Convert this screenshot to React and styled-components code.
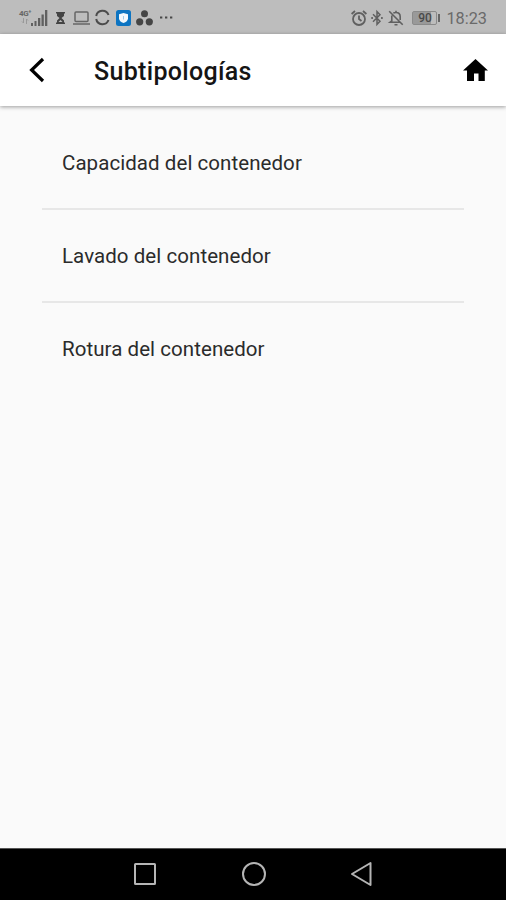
import React from 'react';
import styled, { createGlobalStyle } from 'styled-components';

const GlobalStyle = createGlobalStyle`
  * {
    box-sizing: border-box;
  }

  body {
    margin: 0;
    background: #fafafa;
    font-family: Roboto, sans-serif;
  }
`;

const Screen = styled.div`
  display: flex;
  flex-direction: column;
  height: 900px;
  background: #fafafa;
`;

const StatusBar = styled.div`
  display: flex;
  align-items: center;
  justify-content: space-between;
  height: 34px;
  padding: 1px 19px 0 19px;
  background: #bdbdbd;
  color: #666;
`;

const StatusGroup = styled.div`
  display: flex;
  align-items: center;
`;

const Icon = styled.svg`
  display: block;
  flex: none;
  width: ${props => props.$w}px;
  height: ${props => props.$h}px;
  margin-left: ${props => props.$gap || 0}px;
  overflow: visible;
`;

const Network = styled.div`
  display: flex;
  flex-direction: column;
  align-items: center;
  width: 12px;
  height: 16px;
  font-size: 8px;
  line-height: 8px;
  font-weight: 700;
  letter-spacing: -0.5px;
  white-space: nowrap;
`;

const Battery = styled.div`
  width: 25px;
  height: 14px;
  margin-left: 8px;
  border: 1px solid #8a8a8a;
  border-radius: 2px;
  background: linear-gradient(90deg, #999 0 80%, #bdbdbd 80%);
  color: #4a4a4a;
  font-size: 12px;
  line-height: 13px;
  font-weight: 500;
  text-align: center;
`;

const BatteryTip = styled.div`
  width: 2px;
  height: 8px;
  margin-left: 1px;
  background: #666;
`;

const Clock = styled.div`
  margin-left: 6px;
  padding-top: 2px;
  font-size: 16.3px;
  line-height: 18px;
  color: #6a6a6a;
`;

const Header = styled.header`
  display: flex;
  align-items: center;
  height: 72px;
  padding: 0 18px 0 29px;
  background: #fff;
  box-shadow: 0 1px 4px rgba(0, 0, 0, 0.38);
  z-index: 1;
`;

const Title = styled.h1`
  flex: 1;
  margin: 3px 0 0 49px;
  font-size: 25px;
  line-height: 30px;
  font-weight: 500;
  letter-spacing: 0.32px;
  color: #151515;
`;

const List = styled.ul`
  flex: 1;
  margin: 0;
  padding: 11px 42px 0;
  list-style: none;
`;

const Item = styled.li`
  height: 93px;
  padding: 32px 20px 0;
  border-bottom: 2px solid ${props => (props.$last ? 'transparent' : '#e7e7e7')};
  font-size: 20.5px;
  line-height: 28px;
  letter-spacing: 0.06px;
  color: #2b2b2b;
`;

const NavigationBar = styled.nav`
  display: flex;
  align-items: center;
  height: 52px;
  padding: 0 0 2px 134px;
  border-top: 1px solid #555;
  background: #000;
`;

const items = [
  'Capacidad del contenedor',
  'Lavado del contenedor',
  'Rotura del contenedor'
];

const Notifications = () => (
  <StatusGroup>
    <Network>
      <span>4G⁺</span>
      <Icon $w={6} $h={6} viewBox="0 0 6 6" fill="none" stroke="#999" strokeWidth="1">
        <path d="M1.5 0v5M0 3.5 1.5 5M4.5 6V1M6 2.5 4.5 1" />
      </Icon>
    </Network>
    <Icon $w={17} $h={16} viewBox="0 0 17 16" fill="#606060">
      <path d="M0 13h2v3H0zM3.5 11h2v5h-2zM7 8h2.3v8H7zM10.5 4.5h2.3V16h-2.3zM14 0h2.3v16H14z" />
    </Icon>
    <Icon $w={9} $h={12} $gap={8} viewBox="0 0 9 12" fill="#444">
      <path d="M0 0h9v1.5H8V4L5.5 6 8 8.5v2h1V12H0v-1.500h1v-2L3.500 6 1 4V1.500H0z" />
      <path d="M2.500 10 4.500 8l2 2z" fill="#bdbdbd" />
    </Icon>
    <Icon $w={17} $h={14} $gap={8} viewBox="0 0 17 14" fill="none" stroke="#666" strokeWidth="1.5">
      <rect x="2" y="1" width="13" height="9.5" rx="1" />
      <path d="M0 13h17" />
    </Icon>
    <Icon $w={15} $h={15} $gap={5} viewBox="0 0 15 15" fill="none" stroke="#4c4c4c" strokeWidth="2">
      <path d="M1.2 6A6.4 6.4 0 0 1 13.5 5M1.2 9a6.4 6.4 0 0 0 12.3 1" />
    </Icon>
    <Icon $w={15} $h={16} $gap={6} viewBox="0 0 15 16">
      <rect width="15" height="16" rx="2.5" fill="#0c74c2" />
      <path d="M7.5 3 12 4.2v4c0 2.3-1.8 3.9-4.5 4.8C4.8 12.1 3 10.5 3 8.2v-4z" fill="#f2f8fc" />
      <path d="M7.5 6v3.5" stroke="#9ccbea" />
    </Icon>
    <Icon $w={17} $h={16} $gap={5} viewBox="0 0 17 16" fill="#454545">
      <circle cx="8.5" cy="3.8" r="3.5" />
      <circle cx="3.7" cy="11.8" r="3.6" />
      <circle cx="13.3" cy="11.8" r="3.6" />
    </Icon>
    <Icon $w={13} $h={3} $gap={7} viewBox="0 0 13 3" fill="#484848">
      <path d="M0 .5h2.3v2H0zM5 .5h2.3v2H5zM10 .5h2.3v2H10z" />
    </Icon>
  </StatusGroup>
);

const SystemStatus = () => (
  <StatusGroup>
    <Icon $w={16} $h={16} viewBox="0 0 16 16" fill="none" stroke="#606060" strokeWidth="1.8">
      <circle cx="8" cy="9" r="6" />
      <path d="M8 5.5V9l2.5 2M.6 4 4 1M15.4 4 12 1" />
    </Icon>
    <Icon $w={12} $h={16} $gap={4} viewBox="0 0 12 16" fill="none" stroke="#606060" strokeWidth="1.5">
      <path d="m2 4.2 7 7L6 14.3V1.7l3 3.1-7 7" />
      <path d="M.3 8h1.6M10.1 8h1.6" strokeWidth="1.8" />
    </Icon>
    <Icon $w={16} $h={16} $gap={5} viewBox="0 0 16 16" fill="none" stroke="#606060" strokeWidth="1.6">
      <path d="M5.3 3.2C6 2.7 6.8 2.5 8 2.5c2.7 0 4.2 1.8 4.2 4.3V10M3.8 5.4v5.4L2 12.3h10.5M8 .8v1.7M6.5 14.7h3M1.2 1.2l13.5 13.5" />
    </Icon>
    <Battery>90</Battery>
    <BatteryTip />
    <Clock>18:23</Clock>
  </StatusGroup>
);

const App = () => (
  <>
    <GlobalStyle />
    <Screen>
      <StatusBar>
        <Notifications />
        <SystemStatus />
      </StatusBar>
      <Header>
        <Icon $w={16} $h={26} viewBox="0 0 16 26" fill="none" stroke="#000" strokeWidth="3.2">
          <path d="M14 2 2.6 13 14 24" />
        </Icon>
        <Title>Subtipologías</Title>
        <Icon $w={25} $h={22} viewBox="0 0 25 22">
          <path d="M12.5 0 25 11.5h-3.200V22h-6.300v-7.500h-4.500V22H4V11.500H0z" />
        </Icon>
      </Header>
      <List>
        {
          items.map((item, key) => <Item key={key} $last={key === items.length - 1}>{item}</Item>)
        }
      </List>
      <NavigationBar>
        <Icon $w={22} $h={22} viewBox="0 0 22 22" fill="none" stroke="#b5b5b5" strokeWidth="2">
          <rect x="1" y="1" width="20" height="20" rx="0.5" />
        </Icon>
        <Icon $w={24} $h={24} $gap={86} viewBox="0 0 24 24" fill="none" stroke="#b5b5b5" strokeWidth="2">
          <circle cx="12" cy="12" r="11" />
        </Icon>
        <Icon $w={21} $h={24} $gap={85} viewBox="0 0 21 24" fill="none" stroke="#b5b5b5" strokeWidth="2" strokeLinejoin="round">
          <path d="M19.5 1v22L1 12z" />
        </Icon>
      </NavigationBar>
    </Screen>
  </>
);

export default App;
